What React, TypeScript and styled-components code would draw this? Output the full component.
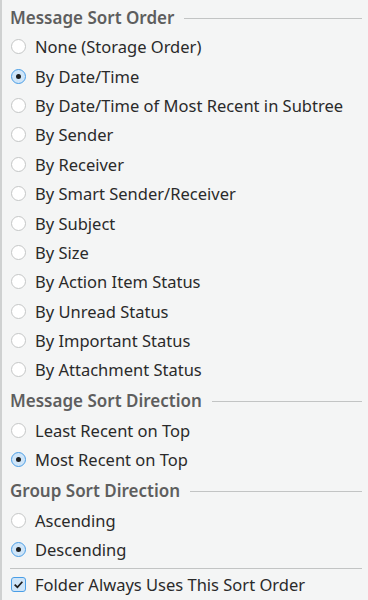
import React, { useState } from "react"
import styled, { createGlobalStyle } from "styled-components"

const Global = createGlobalStyle`
  html, body {
    margin: 0;
    padding: 0;
    background: #f4f5f5;
  }
  body {
    font-family: "Noto Sans", Lato, sans-serif;
  }
`

const Menu = styled.div`
  width: 368px;
  height: 600px;
  box-sizing: border-box;
  background: #f4f5f5;
  border-left: 2px solid #cfd1d1;
  padding: 2px 6px 0 8px;
  display: flex;
  flex-direction: column;
  overflow: hidden;
`

const Heading = styled.div`
  display: flex;
  align-items: center;
  gap: 10px;
  height: 30px;
  font-size: 17px;
  font-weight: 600;
  color: #5e5e5e;
  white-space: nowrap;

  & + & {
    margin-top: 0;
  }
  &:not(:first-child) {
    margin-top: 1px;
  }

  &::after {
    content: "";
    flex: 1;
    height: 1px;
    background: #c2c4c4;
    margin-top: 2px;
  }
`

const Row = styled.label`
  display: flex;
  align-items: center;
  gap: 9px;
  height: 29.4px;
  flex: none;
  font-size: 16.5px;
  color: #2a2a2a;
  white-space: nowrap;
  cursor: default;
`

const Radio = styled.span<{ $checked: boolean }>`
  flex: none;
  width: 15px;
  height: 15px;
  margin-left: 1px;
  box-sizing: border-box;
  border-radius: 50%;
  border: 1px solid ${(p) => (p.$checked ? "#4a9ee6" : "#c4c6c6")};
  background: ${(p) => (p.$checked ? "#cfe5f8" : "#ffffff")};
  display: flex;
  align-items: center;
  justify-content: center;

  &::after {
    content: "";
    display: ${(p) => (p.$checked ? "block" : "none")};
    width: 5px;
    height: 5px;
    border-radius: 50%;
    background: #1e1e1e;
  }
`

const Check = styled.span`
  flex: none;
  width: 15px;
  height: 15px;
  margin-left: 1px;
  box-sizing: border-box;
  border-radius: 3px;
  border: 1px solid #4a9ee6;
  background: #cfe5f8;
  display: flex;
  align-items: center;
  justify-content: center;
`

const Divider = styled.div`
  height: 1px;
  flex: none;
  background: #c2c4c4;
  margin: 4px 0 1px;
`

const groups = [
  {
    title: "Message Sort Order",
    items: [
      "None (Storage Order)",
      "By Date/Time",
      "By Date/Time of Most Recent in Subtree",
      "By Sender",
      "By Receiver",
      "By Smart Sender/Receiver",
      "By Subject",
      "By Size",
      "By Action Item Status",
      "By Unread Status",
      "By Important Status",
      "By Attachment Status",
    ],
    initial: 1,
  },
  {
    title: "Message Sort Direction",
    items: ["Least Recent on Top", "Most Recent on Top"],
    initial: 1,
  },
  {
    title: "Group Sort Direction",
    items: ["Ascending", "Descending"],
    initial: 1,
  },
]

export default function App() {
  const [picked, setPicked] = useState(groups.map((g) => g.initial))
  const [always, setAlways] = useState(true)

  const pick = (gi: number, ii: number) =>
    setPicked((prev) => prev.map((v, i) => (i === gi ? ii : v)))

  return (
    <>
      <Global />
      <Menu>
        {groups.map((g, gi) => (
          <React.Fragment key={g.title}>
            <Heading>{g.title}</Heading>
            {g.items.map((item, ii) => (
              <Row key={item} onClick={() => pick(gi, ii)}>
                <Radio $checked={picked[gi] === ii} />
                {item}
              </Row>
            ))}
          </React.Fragment>
        ))}
        <Divider />
        <Row onClick={() => setAlways((v) => !v)}>
          <Check>
            {always && (
              <svg width="11" height="11" viewBox="0 0 10 10">
                <path d="M1.5 5.2 L4 7.5 L8.5 2.5" fill="none" stroke="#1e1e1e" strokeWidth="1.6" />
              </svg>
            )}
          </Check>
          Folder Always Uses This Sort Order
        </Row>
      </Menu>
    </>
  )
}
